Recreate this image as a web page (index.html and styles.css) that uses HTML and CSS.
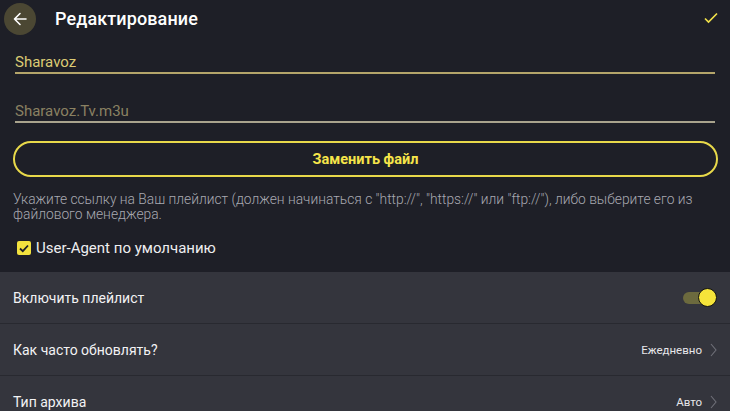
FILE: index.html
```html
<!DOCTYPE html>
<html lang="ru">
<head>
<meta charset="utf-8">
<link rel="stylesheet" href="styles.css">
</head>
<body>
<div class="top">
  <header class="bar">
    <div class="back">
      <svg width="16" height="16" viewBox="0 0 16 16"><path d="M14 8H2.5M8 2.5L2.5 8 8 13.5" fill="none" stroke="#fff" stroke-width="1.6" stroke-linecap="round" stroke-linejoin="round"/></svg>
    </div>
    <h1 class="title">Редактирование</h1>
    <svg class="ok" width="14" height="12" viewBox="0 0 14 12"><path d="M1 6.5L4.5 10 13 1.5" fill="none" stroke="#f0e04a" stroke-width="1.7"/></svg>
  </header>
  <div class="field field-name">Sharavoz</div>
  <div class="field field-file">Sharavoz.Tv.m3u</div>
  <div class="btn">Заменить файл</div>
  <p class="hint">Укажите ссылку на Ваш плейлист (должен начинаться с "http://", "https://" или "ftp://"), либо выберите его из файлового менеджера.</p>
  <label class="check">
    <span class="box"><svg width="10" height="9" viewBox="0 0 10 9"><path d="M1 4.5L3.8 7.2 9 1.5" fill="none" stroke="#1e1f27" stroke-width="1.8"/></svg></span>
    <span>User-Agent по умолчанию</span>
  </label>
</div>
<div class="list">
  <div class="row">
    <span class="label">Включить плейлист</span>
    <span class="toggle"><span class="thumb"></span></span>
  </div>
  <div class="row">
    <span class="label">Как часто обновлять?</span>
    <span class="value">Ежедневно <svg class="chev" width="7" height="14" viewBox="0 0 7 14"><path d="M1 1l5 6-5 6" fill="none" stroke="#6f7078" stroke-width="1.1"/></svg></span>
  </div>
  <div class="row">
    <span class="label">Тип архива</span>
    <span class="value">Авто <svg class="chev" width="7" height="14" viewBox="0 0 7 14"><path d="M1 1l5 6-5 6" fill="none" stroke="#6f7078" stroke-width="1.1"/></svg></span>
  </div>
</div>
</body>
</html>
```
FILE: styles.css
```css
* { box-sizing: border-box; }
html, body { margin: 0; padding: 0; }
body {
  width: 730px;
  height: 411px;
  overflow: hidden;
  background: #1e1f27;
  font-family: Roboto, "Noto Sans", sans-serif;
  color: #fff;
}
.top {
  padding: 0 12px 0 13px;
  height: 272px;
  display: flex;
  flex-direction: column;
}
.bar {
  height: 37px;
  display: flex;
  align-items: center;
  margin-left: -9px;
}
.back {
  width: 32px;
  height: 32px;
  border-radius: 50%;
  background: #4b4733;
  display: flex;
  align-items: center;
  justify-content: center;
  margin-top: 1px;
}
.title {
  margin: 0 0 0 19px;
  font-size: 18px;
  font-weight: 500;
  flex: 1;
  letter-spacing: 0.1px;
}
.ok { margin-right: 0px; margin-top: -2px; }
.field {
  margin-left: 2px;
  margin-right: 3px;
  font-size: 15px;
  padding-bottom: 1px;
}
.field-name {
  margin-top: 16px;
  color: #dccb74;
  border-bottom: 2px solid #b4a56a;
}
.field-file {
  margin-top: 28px;
  color: #8a8162;
  border-bottom: 2px solid #a9a38d;
}
.btn {
  margin-top: 18px;
  height: 36px;
  border: 2px solid #e8d94a;
  border-radius: 18px;
  display: flex;
  align-items: center;
  justify-content: center;
  color: #f6e54a;
  font-weight: 700;
  font-size: 14.5px;
}
.hint {
  margin: 15px 0 0 0;
  font-size: 13.8px;
  font-weight: 300;
  line-height: 15px;
  color: #a8a9b1;
}
.check {
  margin-top: 17px;
  margin-left: 4px;
  display: flex;
  align-items: center;
  gap: 5px;
  font-size: 15px;
  color: #eeeef0;
}
.box {
  width: 14px;
  height: 14px;
  border-radius: 2px;
  background: #f3e23e;
  display: flex;
  align-items: center;
  justify-content: center;
}
.list {
  background: #34353d;
}
.row {
  height: 52px;
  display: flex;
  align-items: center;
  justify-content: space-between;
  padding: 0 13px 0 13px;
  border-bottom: 1px solid #282930;
  font-size: 14px;
  color: #f2f2f4;
}
.value {
  display: flex;
  align-items: center;
  gap: 8px;
  font-size: 11.5px;
  color: #e6e6ea;
}
.chev { margin-right: 0px; }
.toggle {
  position: relative;
  width: 28px;
  height: 12px;
  border-radius: 6px;
  background: #6c6a3e;
  margin-right: 6px;
}
.thumb {
  position: absolute;
  right: -6px;
  top: -4px;
  width: 19px;
  height: 19px;
  border-radius: 50%;
  background: #f5e43a;
  border: 1px solid #14140f;
}
```
